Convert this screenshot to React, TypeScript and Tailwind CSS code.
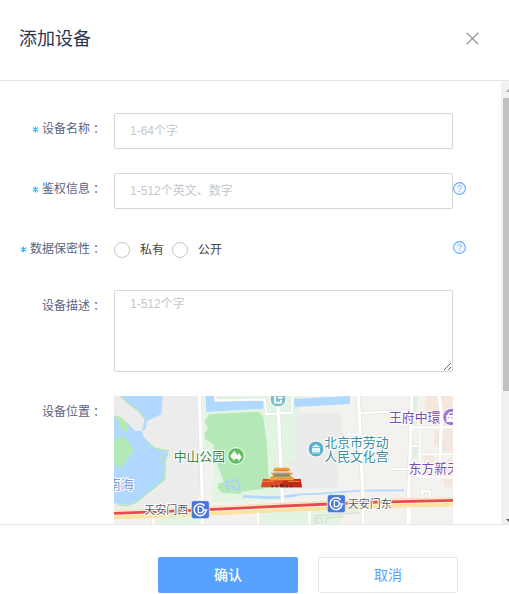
import React from 'react';

const CJK = "font-['Liberation_Sans','Noto_Sans_CJK_SC',sans-serif]";

function Label({ text, required }: { text: string; required?: boolean }) {
  return (
    <div className="flex h-8 w-[114px] shrink-0 items-center justify-end pr-3 text-[12px] text-[#5a6480]">
      {required && (
        <svg className="mr-[3px]" width="7" height="7" viewBox="0 0 7 7" fill="none" stroke="#1cb4fb" strokeWidth="1.1">
          <path d="M3.5 .5v6M.8 1.6l5.4 3.8M6.2 1.6L.8 5.4" />
        </svg>
      )}
      <span>{text}</span>
      <span lang="zh-TW" className="font-['Noto_Sans_CJK_TC',sans-serif]">：</span>
    </div>
  );
}

function Help() {
  return (
    <svg className="shrink-0" width="13" height="13" viewBox="0 0 13 13" fill="none">
      <circle cx="6.5" cy="6.5" r="5.9" fill="#f2f8ff" stroke="#66aaff" strokeWidth="1.1" />
      <path d="M4.8 5.1c0-2.2 3.5-2.1 3.5-.1 0 1.3-1.7 1.2-1.7 2.7M6.6 8.8v1" stroke="#70b0ff" />
    </svg>
  );
}

function Radio({ text }: { text: string }) {
  return (
    <label className="flex items-center text-[12px] text-[#444]">
      <span className="mr-[10px] h-4 w-4 rounded-full border border-[#c4c7cc]" />
      {text}
    </label>
  );
}

function Metro({ x, y }: { x: number; y: number }) {
  return (
    <g transform={`translate(${x} ${y})`}>
      <rect x="-27" y="-27" width="54" height="54" rx="7" fill="#4976d8" stroke="#f4f6fb" strokeWidth="2" />
      <path d="M13-12A18 18 0 1 0 17 4" fill="none" stroke="#fff" strokeWidth="4.5" />
      <path d="M-6-9v18H0a9 9 0 0 0 0-18zM7 1h14" fill="none" stroke="#fff" strokeWidth="4" />
    </g>
  );
}

/* The map is drawn at three units per pixel. */
function CityMap() {
  const road = 'M0 352L230 343L510 330L760 319L1017 313';
  const streets =
    'M256 0L262 180L266 384M492 30L500 200L506 318M733 0L742 180L747 318M893 0L888 180L881 384M975 0L983 60L976 240';
  const lanes =
    'M305 0V13L452 10L457 54L533 50L536 0M738 51L888 45M698 115H737M888 94H1017M890 150H912M917 100V240M912 175H1017M830 219H888M888 236L930 244H1017M923 312V286H948V308';
  const lower = 'M118 364V384M264 366V384M432 346V384M587 340V384M747 330V384M888 326V384';
  return (
    <svg width="339" height="128" viewBox="0 0 1017 384" className={`block shrink-0 ${CJK}`}>
      <rect width="1017" height="384" fill="#f3f2ef" />
      <path d="M0 0H256L266 285L230 330L0 342z" fill="#ececec" />
      <path d="M270 0H560L545 185L515 275L508 312L292 318L300 205L270 180z" fill="#e2f5e3" />
      <path d="M547 52L682 50V105L690 115V185L672 190V275L508 279L520 200L547 190z" fill="#ebebec" />
      {/* lakes and shore */}
      <path d="M20 0L42 22L70 43L92 67L88 90L82 106L94 100L100 74L142 55L146 0z" fill="#b1d8ff" />
      <path d="M20 0L42 22L70 43L92 67L97 76" fill="none" stroke="#b8e6bb" strokeWidth="4" />
      <path d="M0 58L20 67L44 84L64 106L82 104L89 123L125 158L155 164L161 180L155 193L150 250L108 286L70 316L42 326L0 322z" fill="#b1d8ff" />
      <path d="M95 136L125 158L162 164L160 178L142 180L156 192L140 200L154 208L152 250L108 286L70 317L42 329L10 326" fill="none" stroke="#b3e5b5" strokeWidth="4" />
      <path d="M30 119L60 160L22 217L0 204V132z" fill="#b4e8b7" />
      <path d="M0 58L22 64L46 90L38 108L22 98L8 72z" fill="#b4e8b7" />
      {/* park */}
      <path d="M285 55L432 47L448 62L458 140L466 275L384 287L378 294L324 291L310 275L316 262L330 258L308 200L298 145L274 130L272 112L282 98L272 78z" fill="#b4e8b7" />
      <path d="M338 255L350 258L370 250L377 280L362 278L358 270H343V280L336 274z" fill="none" stroke="#a9d3f5" strokeWidth="5" />
      {/* moat */}
      <path d="M275 0H303V18L448 12V38L277 48z" fill="#b1d8ff" />
      <path d="M539 8L708 0V24L542 33z" fill="#b1d8ff" />
      <path d="M388 301L460 305L500 304L560 295L620 293L740 284L870 283" fill="none" stroke="#b3d9fd" strokeWidth="5" />
      <path d="M388 301L460 305L500 304L550 297" fill="none" stroke="#b3d9fd" strokeWidth="8" />
      {/* shopping blocks */}
      <path d="M938 0H1017V88H960L930 28zM962 100H1017V165H985L960 145zM1000 190H1017V272H990V250H1000zM930 180H960V226H930z" fill="#f6e7dc" />
      <path d="M895 0H910V84H895zM895 155H910V185H895z" fill="#dff1dd" />
      {/* south side of the boulevard */}
      <path d="M127 362H257V384H127zM440 346H580V384H440zM594 340H740V384H594z" fill="#e3f4e2" />
      <path d="M680 352H740V384H680z" fill="#f3f2ef" />
      {/* streets */}
      <path d={streets} fill="none" stroke="#e2e2df" strokeWidth="14" />
      <path d={lanes} fill="none" stroke="#dcded8" strokeWidth="9" />
      <path d={lower} fill="none" stroke="#dfe0da" strokeWidth="12" />
      <path d={streets} fill="none" stroke="#fff" strokeWidth="10" />
      <path d={lanes} fill="none" stroke="#fff" strokeWidth="6.5" />
      <path d={lower} fill="none" stroke="#fff" strokeWidth="9" />
      <path d="M600 384V360L738 350M606 366H624V380H606zM636 382V366L690 362" fill="none" stroke="#d0dccb" strokeWidth="3" />
      {/* boulevard */}
      <path d={road} transform="translate(0 4)" fill="none" stroke="#f7d9a0" strokeWidth="27" />
      <path d={road} transform="translate(0 4)" fill="none" stroke="#fdf2dc" strokeWidth="22" />
      <path d={road} transform="translate(0 12)" fill="none" stroke="#fde3a0" strokeWidth="9" />
      <path d={road} fill="none" stroke="#e44c4f" strokeWidth="8.5" />
      <Metro x={259} y={341} />
      <Metro x={667} y={323} />
      {/* points of interest */}
      <circle cx="366" cy="180" r="25" fill="#63bf63" stroke="#fff" strokeWidth="3" />
      <path d="M361 164L350 178Q347 186 357 188V193H362V188H369L373 182zM374 170L368 184V189H373V194H377V189Q384 188 382 182z" fill="#fff" />
      <circle cx="492" cy="9" r="24" fill="#83bdc6" stroke="#fff" strokeWidth="3" />
      <path d="M497-5H483V20H501V11M491 5H506" fill="none" stroke="#fff" strokeWidth="5" />
      <circle cx="606" cy="159" r="24" fill="#5bb0cc" stroke="#fff" strokeWidth="3" />
      <path d="M592 154L606 145L620 154zM594 156H618V169H594z" fill="#e1f7fc" />
      <path d="M592 171H620" stroke="#e1f7fc" strokeWidth="2" />
      <circle cx="1012" cy="63" r="26" fill="#a177d4" stroke="#fff" strokeWidth="3" />
      <path d="M997 57H1027V78H997z" fill="#fff" />
      <path d="M1003 58V54Q1011 44 1019 54V58" fill="none" stroke="#fff" strokeWidth="4" />
      <path d="M1003 63V67M1014 63V67" stroke="#a177d4" strokeWidth="3" />
      {/* Tiananmen gate */}
      <path d="M447 248L471 250L476 240H530L536 250L559 248L564 274H441z" fill="#dc4b29" />
      <path d="M506 250H560L564 274H506z" fill="#bd2a1b" />
      <path d="M478 230H528V246H478z" fill="#c9502b" />
      <path d="M482 215H524L530 226H476zM470 228L478 232H528L537 228L533 237H474zM466 247L474 240H532L540 247L537 253H469z" fill="#eba037" />
      <path d="M480 235H527V241H480z" fill="#4e96a2" />
      <path d="M484 224H522M447 256H480M522 256H557" stroke="#f07a2c" strokeWidth="4" />
      <path d="M498 274V264Q503 260 509 264V274zM472 274V268H478V274zM485 274V267H491V274zM516 274V267H522V274zM529 274V268H535V274z" fill="#75291b" />
      {/* map captions */}
      <g stroke="#fff" strokeWidth="6" strokeLinejoin="round" style={{ paintOrder: 'stroke' }}>
        <text x="-19" y="278" fontSize="39" fill="#7b9dd2">南海</text>
        <text x="179" y="196" fontSize="38.5" fill="#3b8540">中山公园</text>
        <text x="631" y="153" fontSize="38.5" fill="#3a8d9f">北京市劳动</text>
        <text x="631" y="195" fontSize="38.5" fill="#3a8d9f">人民文化宫</text>
        <text x="825" y="78" fontSize="38.5" fill="#7b4cb0">王府中環</text>
        <text x="884" y="231" fontSize="38.5" fill="#7b4cb0">东方新天</text>
        <text x="91" y="354" fontSize="33" fill="#5c5c5c">天安门西</text>
        <text x="701" y="337" fontSize="33" fill="#5c5c5c">天安门东</text>
      </g>
    </svg>
  );
}

export default function App() {
  const field =
    'block w-[339px] shrink-0 rounded-[2px] border border-[#d4d6da] bg-white px-[15px] text-[12px] text-[#333] outline-none placeholder:text-[#c4c7ce] placeholder:opacity-100';
  return (
    <div className={`flex h-[594px] w-[509px] flex-col overflow-hidden bg-white ${CJK}`}>
      <header className="flex h-[81px] shrink-0 items-center justify-between border-b border-[#e6e6e6] pb-1 pl-[19px] pr-[30px]">
        <h1 className="pt-px text-[18px] leading-6 text-[#2c3651]">添加设备</h1>
        <svg width="13" height="13" viewBox="0 0 13 13" stroke="#999" strokeWidth="1.3">
          <path d="M.7 .7l11.6 11.6M12.3 .7L.7 12.3" />
        </svg>
      </header>
      <main className="flex h-[443px] shrink-0 overflow-hidden">
        <form className="w-[501px] shrink-0 pt-8">
          <div className="flex h-[60px]">
            <Label text="设备名称" required />
            <input className={`${field} h-9`} placeholder="1-64个字" />
          </div>
          <div className="flex h-[60px]">
            <Label text="鉴权信息" required />
            <input className={`${field} h-9`} placeholder="1-512个英文、数字" />
            <div className="pt-[9px]"><Help /></div>
          </div>
          <div className="flex h-[57px]">
            <Label text="数据保密性" required />
            <div className="flex h-[34px] w-[339px] shrink-0 items-center gap-2">
              <Radio text="私有" />
              <Radio text="公开" />
            </div>
            <div className="pt-2"><Help /></div>
          </div>
          <div className="flex h-[106px]">
            <Label text="设备描述" />
            <textarea className={`${field} h-[82px] resize py-1`} placeholder="1-512个字" />
          </div>
          <div className="flex h-32">
            <Label text="设备位置" />
            <CityMap />
          </div>
        </form>
        <aside className="flex w-2 flex-col overflow-hidden bg-[#f1f1f1] pl-0.5">
          <svg className="h-[17px] w-[15px] shrink-0" viewBox="0 0 15 17"><path d="M3 11l4-4 4 4z" fill="#a3a3a3" /></svg>
          <div className="h-[293px] w-[15px] shrink-0 bg-[#c1c1c1]" />
          <svg className="mt-auto h-[17px] w-[15px] shrink-0" viewBox="0 0 15 17"><path d="M3 12h8l-4 4z" fill="#505050" /></svg>
        </aside>
      </main>
      <footer className="flex h-[70px] shrink-0 gap-5 border-t border-[#e6e6e6] pl-[158px] pt-8">
        <button className="h-9 w-[140px] rounded-[2px] bg-[#57a1ff] text-[14px] font-medium text-white">确认</button>
        <button className="h-9 w-[140px] rounded-[2px] border border-[#e8e8e8] bg-white text-[14px] text-[#57a1ff]">取消</button>
      </footer>
    </div>
  );
}
